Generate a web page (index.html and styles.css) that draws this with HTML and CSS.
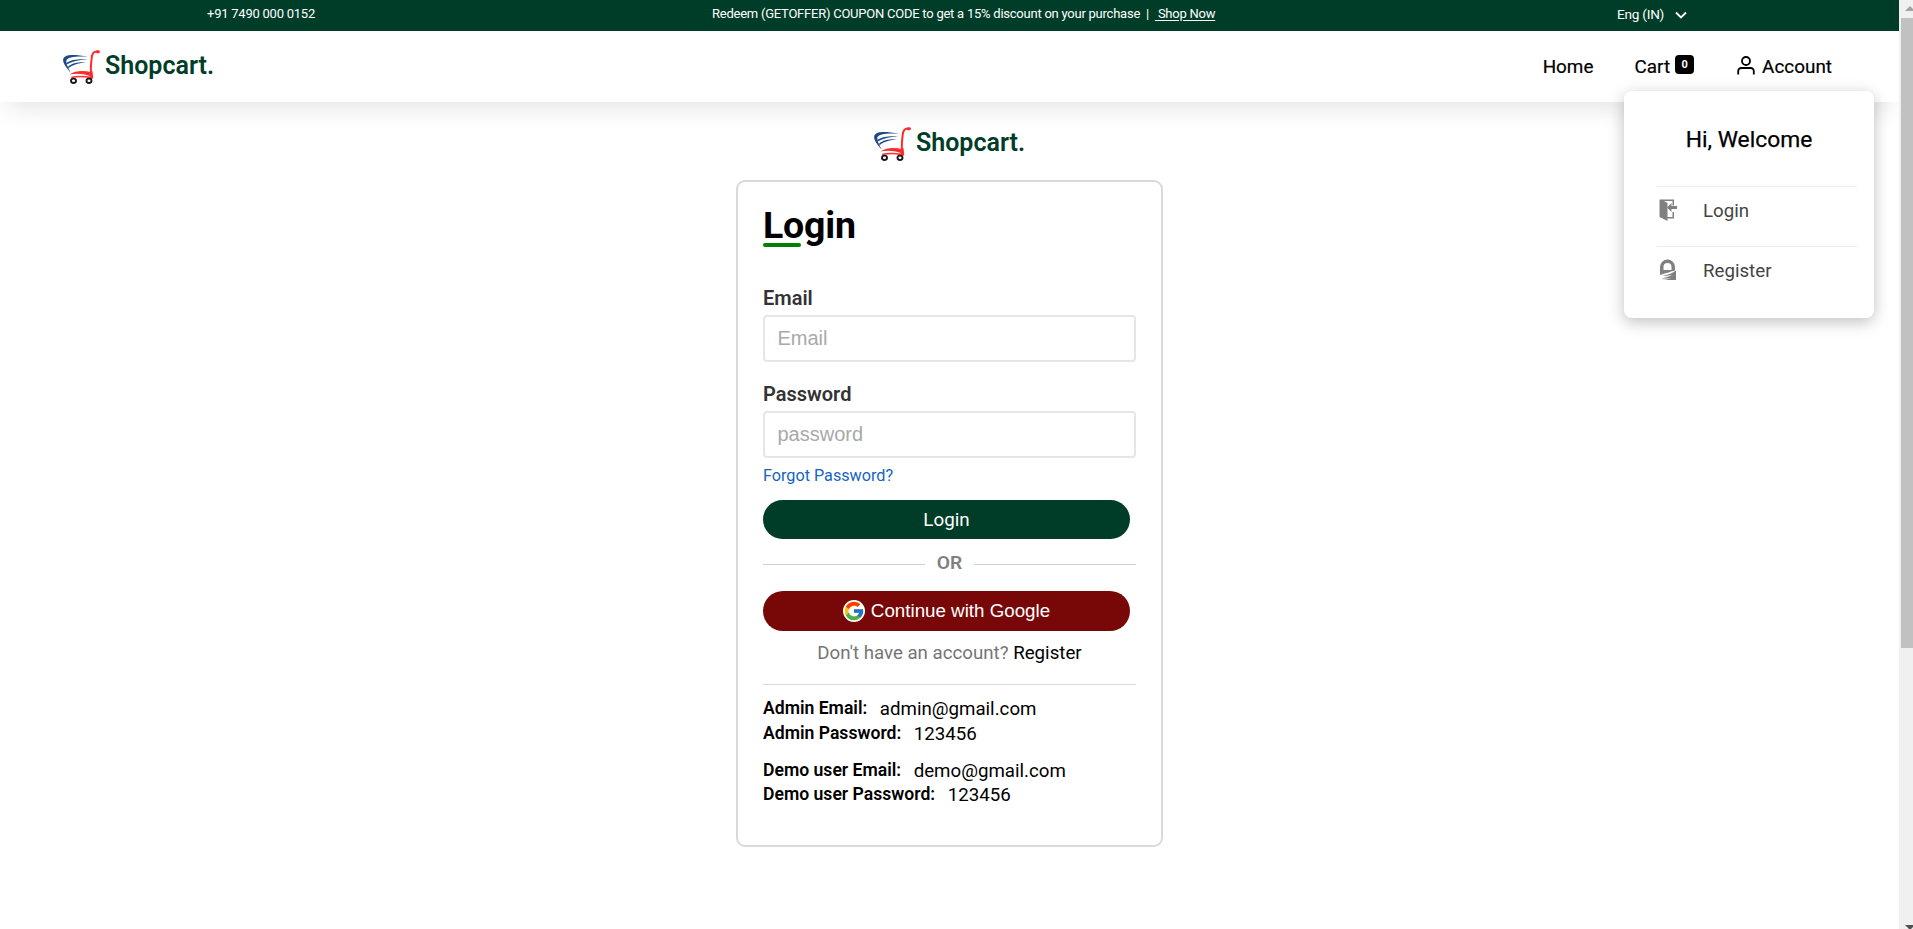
FILE: index.html
```html
<!DOCTYPE html>
<html lang="en">
<head>
<meta charset="utf-8">
<title>Shopcart</title>
<link rel="stylesheet" href="styles.css">
</head>
<body>
<svg width="0" height="0" class="defs" aria-hidden="true">
  <symbol id="cart-logo" viewBox="0 0 37 34">
    <g fill="none" stroke-linecap="round">
      <path d="M35.500 1.600C30.500.6 29 4 28.600 8.500C28 16 27 20 28.500 25" stroke="#fd2b2b" stroke-width="2"/>
      <path d="M34 1.800h1.500" stroke="#fd2b2b" stroke-width="2.800"/>
      <path d="M9 27.300c6-1.200 12-1.200 19 .3" stroke="#fd2b2b" stroke-width="1.600"/>
    </g>
    <path d="M6.500 24.500C12 20.300 21 20.300 27.500 22L29.500 21l.7 7-2 1.500-1.500-3.500C20 23.500 13 23 6.500 24.500z" fill="#fd2b2b"/>
    <path d="M7 22C3.700 18-.5 13 .2 9.200C1.200 4.500 9 3.700 25.500 6.700C13 5.900 4.300 7 3.400 10.500c-.6 3 2 7.500 3.900 11.500z" fill="#1d4a86"/>
    <path d="M3.300 13C9 9.300 15 8.900 24.500 9.300C15 10.300 9.500 11.200 3.600 14.600zM5 16.800c4-3.700 9-4.700 18-4.500C14 13.600 9.500 14.800 5.600 18.200z" fill="#1d4a86"/>
    <g fill="#fff" stroke="#181818" stroke-width="1.900"><ellipse cx="10.500" cy="30.800" rx="2.500" ry="2.200"/><ellipse cx="26" cy="30.800" rx="2.500" ry="2.200"/></g>
  </symbol>
</svg>
<div class="page">
  <div class="topbar">
    <span class="phone">+91 7490 000 0152</span>
    <span class="promo">Redeem (GETOFFER) COUPON CODE to get a 15% discount on your purchase &nbsp;|&nbsp; <a class="shop">&nbsp;Shop Now</a></span>
    <span class="lang">Eng (IN)<svg class="chev" viewBox="0 0 12 8"><path d="M1 1.500 6 6.500l5-5"/></svg></span>
  </div>
  <header class="header">
    <div class="brand"><svg class="logo"><use href="#cart-logo"/></svg><span>Shopcart.</span></div>
    <nav class="nav">
      <a>Home</a>
      <a class="cart">Cart<span class="count">0</span></a>
      <a class="account"><svg class="user" viewBox="0 0 18 19"><circle cx="9" cy="5" r="4"/><path d="M1.200 18.500V15a3 3 0 0 1 3-3h9.600a3 3 0 0 1 3 3v3.500"/></svg>Account</a>
    </nav>
    <div class="menu">
      <div class="hello">Hi, Welcome</div>
      <div class="item"><svg viewBox="0 0 18 22"><path fill="#808080" d="M.5.500H15v6h-1.500V2H5l3.500 2v14h5v-5H15v6.500H8.500V22L.5 18z"/><path fill="#808080" d="M8 8.500 12.500 4v3H18v3h-5.500v3z"/></svg><span>Login</span></div>
      <div class="item"><svg viewBox="0 0 18 22"><path fill="#808080" d="M1 14V8a7.500 7.500 0 0 1 15 0v3.500C12 12.500 8 14 1 16zM4.500 11h8V8a4 4 0 0 0-8 0z"/><path fill="#808080" d="M17 11.500V21H2.500c5-.4 8-1 9.500-1.800C9 19.500 6 19.500 2 19.500c5-1 8-2 11-3.800-3 .8-6 1.200-9.500 1.300C9 16 14 14 17 11.500z"/></svg><span>Register</span></div>
    </div>
  </header>
  <main class="main">
    <div class="brand center"><svg class="logo"><use href="#cart-logo"/></svg><span>Shopcart.</span></div>
    <section class="card">
      <h1 class="title">Login</h1>
      <label class="label">Email</label>
      <input class="input" type="text" placeholder="Email">
      <label class="label second">Password</label>
      <input class="input" type="password" placeholder="password">
      <a class="forgot">Forgot Password?</a>
      <button class="btn login">Login</button>
      <div class="or"><span>OR</span></div>
      <button class="btn google"><svg class="g" viewBox="0 0 48 48"><circle cx="24" cy="24" r="24" fill="#fff"/><path fill="#ffc107" d="M43.600 20H24v8h11.300A12 12 0 1 1 31.900 15.100l5.700-5.700A20 20 0 1 0 43.600 20z"/><path fill="#ff3d00" d="m6.300 14.700 6.600 4.800A12 12 0 0 1 31.900 15.100l5.700-5.700A20 20 0 0 0 6.300 14.700z"/><path fill="#4caf50" d="M24 44a20 20 0 0 0 13.400-5.200l-6.200-5.200A12 12 0 0 1 12.700 28l-6.500 5A20 20 0 0 0 24 44z"/><path fill="#1976d2" d="M43.600 20H24v8h11.300a12 12 0 0 1-4.100 5.600l6.200 5.200C37 39.200 44 34 44 24c0-1.300-.1-2.700-.4-4z"/></svg>Continue with Google</button>
      <p class="signup">Don't have an account? <a>Register</a></p>
      <dl class="creds">
        <div><dt>Admin Email:</dt><dd>admin@gmail.com</dd></div>
        <div><dt>Admin Password:</dt><dd>123456</dd></div>
        <div class="demo"><dt>Demo user Email:</dt><dd>demo@gmail.com</dd></div>
        <div><dt>Demo user Password:</dt><dd>123456</dd></div>
      </dl>
    </section>
  </main>
</div>
<div class="scroll"><i class="up"></i><i class="thumb"></i><i class="down"></i></div>
</body>
</html>
```
FILE: styles.css
```css
* { box-sizing: border-box; }
body { margin: 0; height: 929px; overflow: hidden; display: flex; background: #fff; color: #000; font-family: Roboto, sans-serif; }
.defs { position: absolute; }
.page { width: 1899px; }

.topbar { height: 31px; background: #003d29; color: #fff; font-size: 13px; line-height: 28px; letter-spacing: -0.24px; display: grid; grid-template-columns: 712px 905px 1fr; white-space: nowrap; }
.phone { padding-left: 207px; }
.shop { text-decoration: underline; text-underline-offset: 2px; }
.lang { display: flex; align-items: center; height: 27px; font-size: 13.6px; }
.chev { width: 12px; height: 8px; margin: 3px 0 0 11px; fill: none; stroke: #fff; stroke-width: 1.8; }

.header { position: relative; height: 71px; padding: 0 67px 0 63px; display: flex; align-items: center; justify-content: space-between; box-shadow: 0 14px 24px -8px rgba(0, 0, 0, 0.11); }
.brand { display: flex; align-items: center; color: #003d29; font-size: 25px; font-weight: 600; line-height: 34px; }
.logo { width: 37px; height: 34px; margin-right: 5px; }
.header .brand span { margin-top: -1px; }
.center span { margin-top: -2px; }
.nav { display: flex; align-items: center; font-size: 18.9px; line-height: 24px; font-weight: 400; -webkit-text-stroke: 0.2px #000; }
.nav a { display: flex; align-items: center; }
.cart { margin-left: 41px; }
.count { width: 19px; height: 19px; margin: -4px 0 0 5px; border-radius: 4px; background: #000; color: #fff; font-size: 11px; line-height: 19px; font-weight: 700; text-align: center; -webkit-text-stroke: 0; }
.account { margin-left: 43px; }
.user { width: 18px; height: 19px; margin: -3px 7px 0 0; fill: none; stroke: #000; stroke-width: 1.8; }

.menu { position: absolute; z-index: 2; left: 1624px; top: 60px; width: 250px; height: 227px; padding: 34px 17px 0 33px; border-radius: 8px; background: #fff; box-shadow: 0 4px 16px rgba(0, 0, 0, 0.25); }
.hello { height: 61px; margin-right: 16px; font-size: 22.8px; line-height: 30px; font-weight: 400; text-align: center; -webkit-text-stroke: 0.25px #000; }
.item { display: flex; height: 60px; border-top: 1px solid #ededed; color: #444; font-size: 18.7px; line-height: 24px; padding: 12px 0 0 2px; }
.item svg { width: 18px; height: 22px; margin-right: 26px; }

.main { display: flex; flex-direction: column; align-items: center; padding-top: 24px; }
.center { height: 36px; margin-bottom: 18px; }
.card { width: 427px; height: 667px; padding: 22px 25px 0; border: 2px solid #d9dada; border-radius: 9px; }
.title { position: relative; margin: 0; height: 82px; font-size: 37.5px; line-height: 42px; font-weight: 700; letter-spacing: -0.2px; }
.title::after { content: ""; position: absolute; left: 0; top: 39px; width: 38px; height: 4px; border-radius: 2px; background: green; }
.label { display: block; height: 29px; font-size: 20px; line-height: 24px; font-weight: 600; color: #333; }
.second { margin-top: 20px; }
.input { display: block; width: 373px; height: 47px; padding: 0 12.5px; border: 2px solid #e6e6e6; border-radius: 4px; font: 20px "Liberation Sans", sans-serif; outline: none; }
.input::placeholder { color: #a9a9a9; opacity: 1; }
.forgot { display: block; height: 20px; margin-top: 7px; font-size: 16.2px; line-height: 22px; color: #1565c0; }
.btn { display: flex; align-items: center; justify-content: center; width: 367px; padding: 0; border: 0; border-radius: 20px; color: #fff; }
.login { height: 39px; margin-top: 15px; background: #003d29; font: 400 18.8px Roboto, sans-serif; }
.or { display: flex; align-items: center; gap: 12px; height: 24px; margin-top: 13px; color: #808080; font-size: 19.2px; font-weight: 600; line-height: 24px; }
.or span { margin-top: -2px; }
.or::before, .or::after { content: ""; flex: 1; height: 1px; margin-top: 1px; background: #d0d1d6; }
.google { height: 40px; margin-top: 15px; background: #780808; font: 18.75px "Liberation Sans", sans-serif; }
.g { width: 22px; height: 22px; margin-right: 6px; }
.signup { margin: 9px 0 0; height: 45px; font-size: 18.7px; line-height: 26px; text-align: center; color: #757575; border-bottom: 1px solid #d9d9d9; }
.signup a { color: #000; }
.creds { margin: 11px 0 0; }
.creds div { display: flex; gap: 12.5px; height: 25px; line-height: 24px; }
.creds .demo { margin-top: 12px; height: 24px; }
.creds dt { font-size: 17.6px; font-weight: 600; }
.creds dd { margin: 1px 0 0; font-size: 18.7px; }

.scroll { position: relative; width: 14px; height: 929px; background: #f0f0f0; }
.scroll i { position: absolute; }
.thumb { left: 2px; top: 18px; width: 12px; height: 630px; background: #c1c1c1; }
.up { left: 6px; top: 6px; border: 5px solid transparent; border-top: 0; border-bottom-color: #a3a3a3; }
.down { left: 6px; top: 925px; border: 5px solid transparent; border-bottom: 0; border-top-color: #505050; }
```
